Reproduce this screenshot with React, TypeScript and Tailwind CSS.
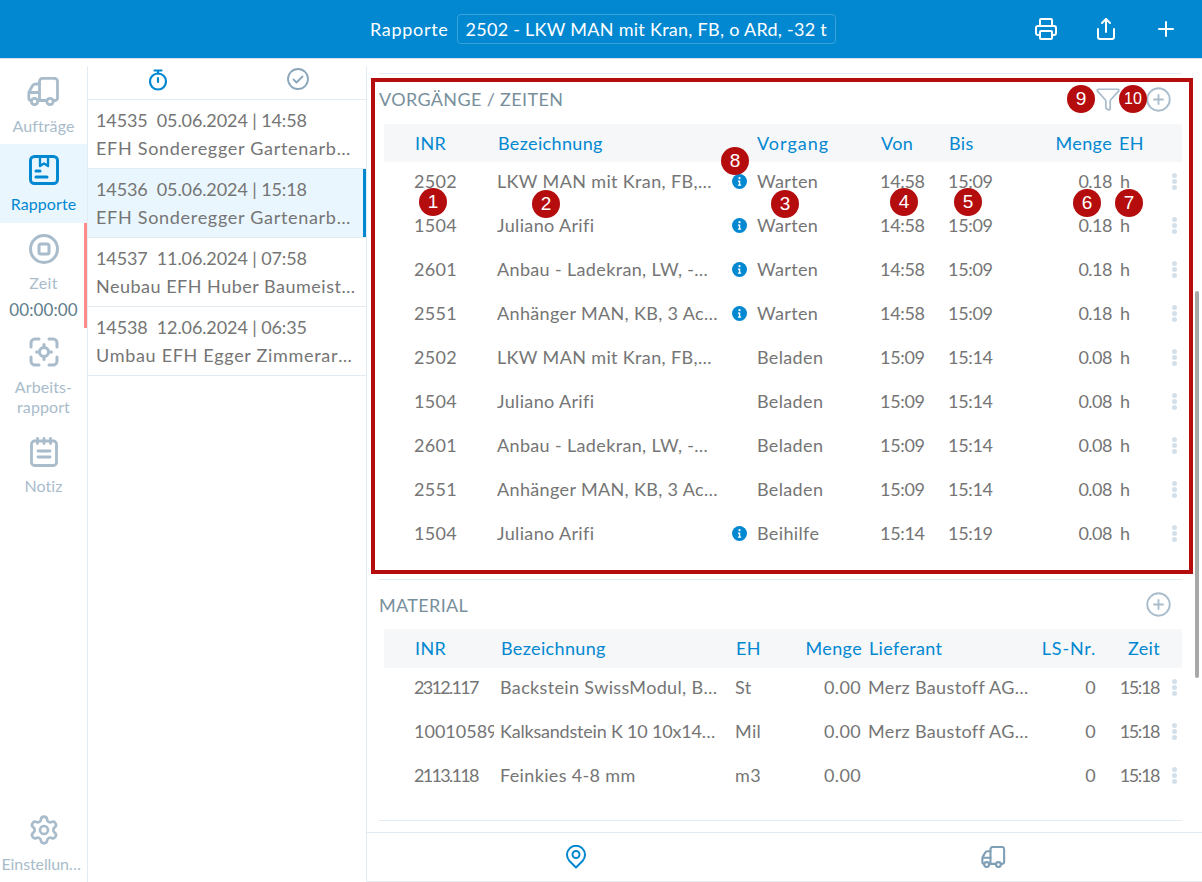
import React from "react";
import { Printer, Share, Plus, Settings, CirclePlus, Funnel } from "lucide-react";

const font = { fontFamily: '"Lato", "Liberation Sans", sans-serif' };

function TruckIcon({ className }: { className?: string }) {
  return (
    <svg viewBox="0 0 32 29" fill="none" stroke="currentColor" strokeWidth="2.8" strokeLinecap="round" strokeLinejoin="round" className={className}>
      <path d="M12 23.5h7.500M25.500 23.500h2.500a2.500 2.500 0 0 0 2-2.500V4.300a3 3 0 0 0-3-3H15a3 3 0 0 0-3 3v19" />
      <path d="M12 7H8a3.500 3.500 0 0 0-3 1.800L2 14a4 4 0 0 0-.7 2.300V21a2.500 2.500 0 0 0 2.200 2.500M1.500 15.500H12" />
      <circle cx="7" cy="24.500" r="3.200" />
      <circle cx="22.500" cy="24.500" r="3.200" />
    </svg>
  );
}
function ReportIcon({ className }: { className?: string }) {
  return (
    <svg viewBox="0 0 30 30" fill="none" stroke="currentColor" strokeWidth="3" strokeLinecap="round" strokeLinejoin="round" className={className}>
      <rect x="1.500" y="1.500" width="27" height="27" rx="4" />
      <path d="M11 2v9l4-2.500 4 2.500V2" strokeWidth="2.400" />
      <path d="M7 16h4M7 22h11" />
    </svg>
  );
}
function StopIcon({ className }: { className?: string }) {
  return (
    <svg viewBox="0 0 30 30" fill="none" stroke="currentColor" strokeWidth="3" className={className}>
      <circle cx="15" cy="15" r="13.500" />
      <rect x="10" y="10" width="10" height="10" rx="2" />
    </svg>
  );
}
function FocusIcon({ className }: { className?: string }) {
  return (
    <svg viewBox="0 0 30 30" fill="none" stroke="currentColor" strokeWidth="3" strokeLinecap="round" strokeLinejoin="round" className={className}>
      <path d="M2 10V6a4 4 0 0 1 4-4h4M20 2h4a4 4 0 0 1 4 4v4M28 20v4a4 4 0 0 1-4 4h-4M10 28H6a4 4 0 0 1-4-4v-4" />
      <circle cx="15" cy="15" r="4.500" />
      <path d="M15 7.500v3M15 19.500v3M7.500 15h3M19.500 15h3" />
    </svg>
  );
}
function NoteIcon({ className }: { className?: string }) {
  return (
    <svg viewBox="0 0 28 30" fill="none" stroke="currentColor" strokeWidth="2.800" strokeLinecap="round" strokeLinejoin="round" className={className}>
      <rect x="1.500" y="4" width="25" height="24.500" rx="3" />
      <path d="M7.500 1.500v5M14 1.500v5M20.500 1.500v5M8 14h12M8 20h12" />
    </svg>
  );
}
function TimerIcon({ className }: { className?: string }) {
  return (
    <svg viewBox="0 0 20 22" fill="none" stroke="currentColor" strokeWidth="2.200" strokeLinecap="round" className={className}>
      <circle cx="10" cy="12.500" r="8" />
      <path d="M6.500 1.500h7M10 1.500v3" />
      <path d="M10 9v4" />
    </svg>
  );
}
function CheckIcon({ className }: { className?: string }) {
  return (
    <svg viewBox="0 0 22 22" fill="none" stroke="currentColor" strokeWidth="1.800" strokeLinecap="round" strokeLinejoin="round" className={className}>
      <circle cx="11" cy="11" r="10" />
      <path d="M6.500 11.500l3 3 6-6" />
    </svg>
  );
}
function PinIcon({ className }: { className?: string }) {
  return (
    <svg viewBox="0 0 20 24" fill="none" stroke="currentColor" strokeWidth="2" strokeLinejoin="round" className={className}>
      <path d="M10 22.500L3.500 16a9 9 0 1 1 13 0z" />
      <circle cx="10" cy="9.500" r="3.500" />
    </svg>
  );
}
function InfoIcon() {
  return (
    <svg viewBox="0 0 16 16" className="-ml-px h-[15px] w-[15px]">
      <circle cx="8" cy="8" r="8" fill="#0288d1" />
      <circle cx="8" cy="4.500" r="1.200" fill="#fff" />
      <path d="M6.300 7h2.500v4.300h1v1.200H6.300v-1.200h1V8.200h-1z" fill="#fff" />
    </svg>
  );
}
function Dots() {
  return (
    <span className="flex flex-col items-center gap-[1px]">
      <span className="h-[5px] w-[5px] rounded-full bg-[#d3e0ea]" />
      <span className="h-[5px] w-[5px] rounded-full bg-[#d3e0ea]" />
      <span className="h-[5px] w-[5px] rounded-full bg-[#d3e0ea]" />
    </span>
  );
}
function Badge({ n, className }: { n: number; className: string }) {
  return (
    <span
      style={{ fontFamily: '"Liberation Sans", sans-serif' }}
      className={`absolute z-20 flex h-[28px] w-[28px] items-center justify-center rounded-full bg-[#b50d0d] tracking-normal text-white ${n === 10 ? "text-[16px] tracking-[-1px]" : "text-[19px]"} ${className}`}
    >
      {n}
    </span>
  );
}

function NavItem({ icon, label }: { icon: React.ReactNode; label: string }) {
  return (
    <div className="flex h-[78px] flex-col items-center pt-[11px] text-[#a9bccb]">
      {icon}
      <span className="mt-[10px] text-[16px] leading-[20px] tracking-[0.1px]">{label}</span>
    </div>
  );
}

const orders = [
  ["14535  05.06.2024 | 14:58", "EFH Sonderegger Gartenarbeiten"],
  ["14536  05.06.2024 | 15:18", "EFH Sonderegger Gartenarbeiten"],
  ["14537  11.06.2024 | 07:58", "Neubau EFH Huber Baumeisterarbeiten"],
  ["14538  12.06.2024 | 06:35", "Umbau EFH Egger Zimmerarbeiten"],
];

const times = [
  ["2502", "LKW MAN mit Kran, FB, o ARd, -32 t", true, "Warten", "14:58", "15:09", "0.18"],
  ["1504", "Juliano Arifi", true, "Warten", "14:58", "15:09", "0.18"],
  ["2601", "Anbau - Ladekran, LW, -15 t", true, "Warten", "14:58", "15:09", "0.18"],
  ["2551", "Anhänger MAN, KB, 3 Achsen", true, "Warten", "14:58", "15:09", "0.18"],
  ["2502", "LKW MAN mit Kran, FB, o ARd, -32 t", false, "Beladen", "15:09", "15:14", "0.08"],
  ["1504", "Juliano Arifi", false, "Beladen", "15:09", "15:14", "0.08"],
  ["2601", "Anbau - Ladekran, LW, -15 t", false, "Beladen", "15:09", "15:14", "0.08"],
  ["2551", "Anhänger MAN, KB, 3 Achsen", false, "Beladen", "15:09", "15:14", "0.08"],
  ["1504", "Juliano Arifi", true, "Beihilfe", "15:14", "15:19", "0.08"],
] as const;

const materials = [
  ["2312.117", "Backstein SwissModul, BN 15", "St", "0.00", "Merz Baustoff AG, Rheineck", "0", "15:18"],
  ["10010589", "Kalksandstein K 10 10x14.5x25", "Mil", "0.00", "Merz Baustoff AG, Rheineck", "0", "15:18"],
  ["2113.118", "Feinkies 4-8 mm", "m3", "0.00", "", "0", "15:18"],
];

const timeCols = "grid grid-cols-[113px_236px_24px_123px_68px_100px_64px_53px_16px] items-center";
const matCols = "grid grid-cols-[116px_235px_65px_62px_172px_62px_64px_21px] items-center";

export default function App() {
  return (
    <div style={font} className="relative flex h-[882px] w-[1202px] flex-col overflow-hidden bg-white text-[18px] tracking-[0.35px] text-[#757575]">
      <header className="flex h-[59px] shrink-0 items-center border-b border-[#d6e3ec] bg-[#0288d1] text-white">
        <div className="ml-[370px] flex items-center gap-[8px]">
          <span className="tracking-[0.7px]">Rapporte</span>
          <span className="flex h-[30px] w-[379px] items-center rounded border border-[#3ba3dc] pl-[8px] tracking-[0.27px]">2502 - LKW MAN mit Kran, FB, o ARd, -32 t</span>
        </div>
        <div className="ml-auto mr-[24px] flex items-center gap-[36px]">
          <Printer className="h-[24px] w-[24px]" strokeWidth={2} />
          <Share className="h-[24px] w-[24px]" strokeWidth={2} />
          <Plus className="h-[24px] w-[24px]" strokeWidth={2} />
        </div>
      </header>

      <div className="flex min-h-0 flex-1 pt-[7px]">
        <nav className="flex w-[88px] shrink-0 flex-col border-r border-[#e3ecf3]">
          <NavItem icon={<TruckIcon className="h-[29px] w-[33px]" />} label="Aufträge" />
          <div className="flex h-[79px] flex-col items-center bg-[#eaf6fd] pt-[11px] text-[#0288d1]">
            <ReportIcon className="h-[30px] w-[30px]" />
            <span className="mt-[9px] text-[16px] leading-[20px] tracking-[0.1px]">Rapporte</span>
          </div>
          <div className="relative flex h-[105px] flex-col items-center pt-[11px] text-[#a9bccb]">
            <span className="absolute right-0 top-0 h-[105px] w-[3px] bg-[#ff8a8a]" />
            <StopIcon className="h-[30px] w-[30px]" />
            <span className="mt-[9px] text-[16px] leading-[20px]">Zeit</span>
            <span className="mt-[7px] text-[17px] leading-[20px] tracking-[0.1px] text-[#607d8b]">00:00:00</span>
          </div>
          <div className="flex h-[109px] flex-col items-center pt-[9px] text-[#a9bccb]">
            <FocusIcon className="h-[30px] w-[30px]" />
            <span className="mt-[10px] text-center text-[16px] leading-[20px] tracking-[0.1px]">Arbeits-<br />rapport</span>
          </div>
          <div className="flex flex-col items-center text-[#a9bccb]">
            <NoteIcon className="h-[30px] w-[28px]" />
            <span className="mt-[9px] text-[16px] leading-[20px] tracking-[0.1px]">Notiz</span>
          </div>
          <div className="mt-auto flex flex-col items-center pb-[8px] text-[#a9bccb]">
            <Settings className="h-[32px] w-[32px]" strokeWidth={2} />
            <span className="mt-[8px] w-[84px] truncate text-center text-[16px] leading-[20px] tracking-[-0.1px]">Einstellungen</span>
          </div>
        </nav>

        <aside className="flex w-[279px] shrink-0 flex-col border-r border-[#e3ecf3]">
          <div className="flex h-[34px] items-start border-b border-[#e3ecf3]">
            <div className="flex w-[139px] justify-center pt-[2px]"><TimerIcon className="h-[24px] w-[20px] text-[#0288d1]" /></div>
            <div className="flex w-[139px] justify-center pl-[2px] pt-[2px]"><CheckIcon className="h-[22px] w-[22px] text-[#8aa6ba]" /></div>
          </div>
          {orders.map(([a, b], i) => (
            <div key={a} className={`relative flex h-[69px] flex-col justify-center border-b border-[#e3ecf3] pl-[8px] ${i === 2 ? "pr-[5px]" : "pr-[11px]"} ${i === 1 ? "bg-[#eaf6fd]" : ""}`}>
              {i === 1 && <span className="absolute bottom-0 right-0 top-0 w-[3px] bg-[#0288d1]" />}
              <div className="whitespace-pre leading-[28px] tracking-[-0.1px]">{a}</div>
              <div className={`truncate leading-[28px] ${i === 2 ? "tracking-[0.5px]" : "tracking-[0.7px]"}`}>{b}</div>
            </div>
          ))}
        </aside>

        <main className="relative flex min-w-0 flex-1 flex-col">
          <div className="absolute right-[3px] top-[225px] h-[387px] w-[4px] rounded bg-[#a8a8a8]" />
          <div className="ml-[12px] mr-[20px] mt-[7px] flex-1 border-t border-[#e3ecf3]">
            <section className="relative h-[506px] border-b border-[#e3ecf3]">
              <div className="flex h-[50px] items-center justify-between pr-[10px]">
                <span className="text-[#78909c]">VORGÄNGE / ZEITEN</span>
                <span className="flex items-center gap-[24px] text-[#a9bccb]">
                  <Funnel className="h-[26px] w-[26px]" strokeWidth={1.600} />
                  <CirclePlus className="h-[27px] w-[27px]" strokeWidth={1.600} />
                </span>
              </div>
              <div className="ml-[5px]">
                <div className={`${timeCols} h-[38px] bg-[#f5f7f9] text-[#0288d1]`}>
                  <span className="pl-[31px]">INR</span>
                  <span className="pl-[1px]">Bezeichnung</span>
                  <span />
                  <span className="whitespace-nowrap tracking-[1px]">Vorgang</span>
                  <span className="pl-[1px]">Von</span>
                  <span className="pl-[1px]">Bis</span>
                  <span className="whitespace-nowrap text-right">Menge</span>
                  <span className="pl-[7px]">EH</span>
                  <span />
                </div>
                {times.map((r, i) => (
                  <div key={i} className={`${timeCols} h-[44px] pb-[5px]`}>
                    <span className="pl-[30px]">{r[0]}</span>
                    <span className={`truncate ${r[0] === "2551" ? "pr-[13px]" : "pr-[17px]"}`}>{r[1]}</span>
                    <span className="flex items-center">{r[2] && <InfoIcon />}</span>
                    <span>{r[3]}</span>
                    <span className="tracking-[-0.3px]">{r[4]}</span>
                    <span className="tracking-[-0.3px]">{r[5]}</span>
                    <span className="text-right tracking-[-0.5px]">{r[6]}</span>
                    <span className="pl-[8px]">h</span>
                    <span className="flex pl-[7px]"><Dots /></span>
                  </div>
                ))}
              </div>
            </section>
            <section className="h-[241px] border-b border-[#e3ecf3]">
              <div className="flex h-[49px] items-center justify-between pr-[10px]">
                <span className="pt-[1px] text-[#78909c]">MATERIAL</span>
                <CirclePlus className="h-[27px] w-[27px] text-[#a9bccb]" strokeWidth={1.600} />
              </div>
              <div className="ml-[5px]">
                <div className={`${matCols} h-[39px] bg-[#f5f7f9] text-[#0288d1]`}>
                  <span className="pl-[31px]">INR</span>
                  <span className="pl-[1px]">Bezeichnung</span>
                  <span className="pl-[1px]">EH</span>
                  <span className="whitespace-nowrap text-right">Menge</span>
                  <span className="pl-[7px]">Lieferant</span>
                  <span className="whitespace-nowrap text-right tracking-[0.8px]">LS-Nr.</span>
                  <span className="text-right">Zeit</span>
                  <span />
                </div>
                {materials.map((r) => (
                  <div key={r[0]} className={`${matCols} h-[44px] pb-[5px]`}>
                    <span className={`w-[110px] overflow-hidden whitespace-nowrap pl-[30px] ${r[0] === "10010589" ? "tracking-normal" : "tracking-[-1.700px]"}`}>{r[0]}</span>
                    <span className={`truncate ${r[0] === "10010589" ? "pr-[18px] tracking-[-0.2px]" : "pr-[13px]"}`}>{r[1]}</span>
                    <span>{r[2]}</span>
                    <span className="pr-[1px] text-right">{r[3]}</span>
                    <span className="truncate pl-[6px] pr-[4px]">{r[4]}</span>
                    <span className="text-right">{r[5]}</span>
                    <span className="pr-[1px] text-right tracking-[-1.400px]">{r[6]}</span>
                    <span className="flex justify-end pr-[4px]"><Dots /></span>
                  </div>
                ))}
              </div>
            </section>
          </div>
          <div className="flex h-[50px] shrink-0 border-y border-[#e3ecf3]">
            <div className="flex flex-1 items-center justify-center"><PinIcon className="h-[24px] w-[20px] text-[#0288d1]" /></div>
            <div className="flex flex-1 items-center justify-center"><TruckIcon className="h-[22px] w-[25px] text-[#7f9fb6]" /></div>
          </div>
        </main>
      </div>

      <div className="pointer-events-none absolute left-[371px] top-[78px] z-10 h-[496px] w-[822px] border-[4px] border-[#b50d0d]" />
      <Badge n={1} className="left-[419px] top-[188px]" />
      <Badge n={2} className="left-[532px] top-[190px]" />
      <Badge n={3} className="left-[771px] top-[190px]" />
      <Badge n={4} className="left-[890px] top-[188px]" />
      <Badge n={5} className="left-[954px] top-[188px]" />
      <Badge n={6} className="left-[1073px] top-[189px]" />
      <Badge n={7} className="left-[1115px] top-[189px]" />
      <Badge n={8} className="left-[721px] top-[147px]" />
      <Badge n={9} className="left-[1067px] top-[85px]" />
      <Badge n={10} className="left-[1119px] top-[85px]" />
    </div>
  );
}
